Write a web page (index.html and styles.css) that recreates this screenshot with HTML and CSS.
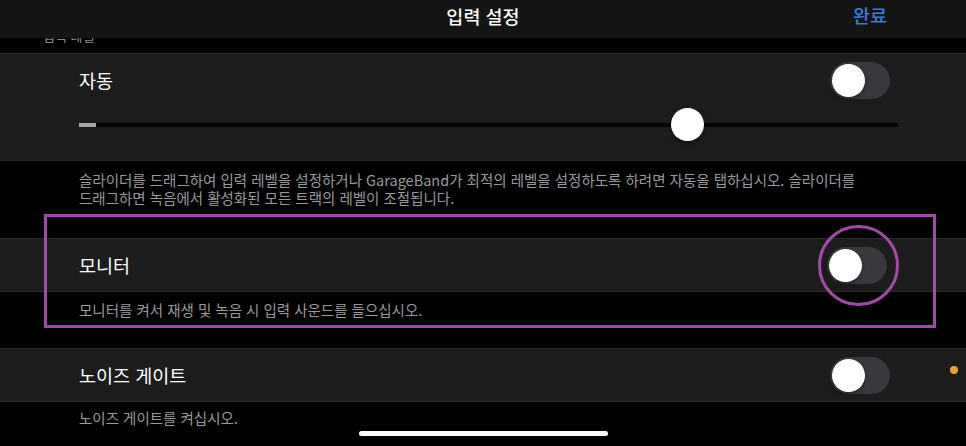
FILE: index.html
```html
<!DOCTYPE html>
<html lang="ko">
<head>
<meta charset="utf-8">
<title>입력 설정</title>
<link rel="stylesheet" href="styles.css">
</head>
<body>
<div class="screen">
  <header class="navbar">
    <div class="nav-title">입력 설정</div>
    <div class="nav-done">완료</div>
  </header>

  <main class="content">
    <div class="section-label">입력 레벨</div>

    <section class="group">
      <div class="row">
        <span class="row-label">자동</span>
        <span class="switch"><span class="knob"></span></span>
      </div>
      <div class="slider-row">
        <div class="slider">
          <div class="track"><div class="meter"></div></div>
          <div class="thumb"></div>
        </div>
      </div>
    </section>
    <p class="footer footer-auto">슬라이더를 드래그하여 입력 레벨을 설정하거나 GarageBand가 최적의 레벨을 설정하도록 하려면 자동을 탭하십시오. 슬라이더를 드래그하면 녹음에서 활성화된 모든 트랙의 레벨이 조절됩니다.</p>

    <section class="group">
      <div class="row">
        <span class="row-label">모니터</span>
        <span class="switch switch-monitor"><span class="knob"></span></span>
      </div>
    </section>
    <p class="footer footer-monitor">모니터를 켜서 재생 및 녹음 시 입력 사운드를 들으십시오.</p>

    <section class="group">
      <div class="row">
        <span class="row-label">노이즈 게이트</span>
        <span class="switch"><span class="knob"></span></span>
      </div>
    </section>
    <p class="footer footer-noise">노이즈 게이트를 켜십시오.</p>
  </main>

  <div class="highlight-box"></div>
  <div class="highlight-circle"></div>
  <div class="orange-dot"></div>
  <div class="home-indicator"></div>
</div>
</body>
</html>
```

FILE: styles.css
```css
* { box-sizing: border-box; }

html, body {
  margin: 0;
  padding: 0;
  background: #000;
  height: 100%;
  overflow: hidden;
}

body {
  font-family: "Noto Sans CJK KR", "Noto Sans", "Liberation Sans", sans-serif;
  color: #fff;
}

.screen {
  position: relative;
  width: 966px;
  height: 446px;
  overflow: hidden;
  background: #000;
}

.navbar {
  position: absolute;
  top: 0;
  left: 0;
  right: 0;
  height: 38px;
  background: #141414;
  z-index: 5;
  display: flex;
  align-items: center;
  justify-content: center;
}

.nav-title {
  font-size: 18.5px;
  font-weight: 500;
  color: #fff;
  margin-top: -6px;
}

.nav-done {
  position: absolute;
  right: 79px;
  top: 2px;
  font-size: 18.5px;
  font-weight: 500;
  color: #2f7ee6;
}

.content {
  display: flex;
  flex-direction: column;
}

.section-label {
  height: 53px;
  padding: 28px 0 0 43px;
  font-size: 13px;
  line-height: 16px;
  color: #8e8e93;
}

.group {
  background: #1c1c1c;
  border-top: 1px solid #2a2a2a;
  border-bottom: 1px solid #2a2a2a;
}

.row {
  height: 52px;
  padding: 0 76px 0 79px;
  display: flex;
  align-items: center;
  justify-content: space-between;
}

.row-label {
  font-size: 18.5px;
  color: #fff;
}

.switch {
  position: relative;
  width: 60px;
  height: 37px;
  border-radius: 19px;
  background: #39393d;
  display: flex;
  align-items: center;
  padding: 0 2px;
}

.switch-monitor {
  margin-right: 3px;
}

.knob {
  width: 33px;
  height: 33px;
  border-radius: 50%;
  background: #fff;
  box-shadow: 0 2px 4px rgba(0, 0, 0, 0.35);
}

.slider-row {
  height: 54px;
  padding: 0 68px 0 79px;
}

.slider {
  position: relative;
  height: 38px;
}

.track {
  position: absolute;
  left: 0;
  right: 0;
  top: 17px;
  height: 4px;
  background: #050505;
}

.meter {
  width: 17px;
  height: 4px;
  background: #a4a7a4;
}

.thumb {
  position: absolute;
  left: 592px;
  top: 2px;
  width: 33px;
  height: 33px;
  border-radius: 50%;
  background: #fff;
  box-shadow: 0 2px 5px rgba(0, 0, 0, 0.4);
}

.footer {
  margin: 0;
  padding: 0 79px;
  font-size: 14.5px;
  line-height: 18px;
  color: #9a9a9e;
  word-break: keep-all;
}

.footer-auto {
  padding-top: 10px;
  height: 77px;
}

.footer-monitor {
  padding-top: 9px;
  height: 56px;
}

.footer-noise {
  padding-top: 7px;
}

.highlight-box {
  position: absolute;
  left: 44px;
  top: 214px;
  width: 892px;
  height: 114px;
  border: 3px solid #a24aa8;
  z-index: 3;
}

.highlight-circle {
  position: absolute;
  left: 818px;
  top: 225px;
  width: 81px;
  height: 81px;
  border: 3px solid #a24aa8;
  border-radius: 50%;
  z-index: 3;
}

.orange-dot {
  position: absolute;
  left: 950px;
  top: 366px;
  width: 8px;
  height: 8px;
  border-radius: 50%;
  background: #f0a030;
}

.home-indicator {
  position: absolute;
  left: 359px;
  top: 431px;
  width: 249px;
  height: 5px;
  border-radius: 3px;
  background: #fff;
  z-index: 6;
}
```
